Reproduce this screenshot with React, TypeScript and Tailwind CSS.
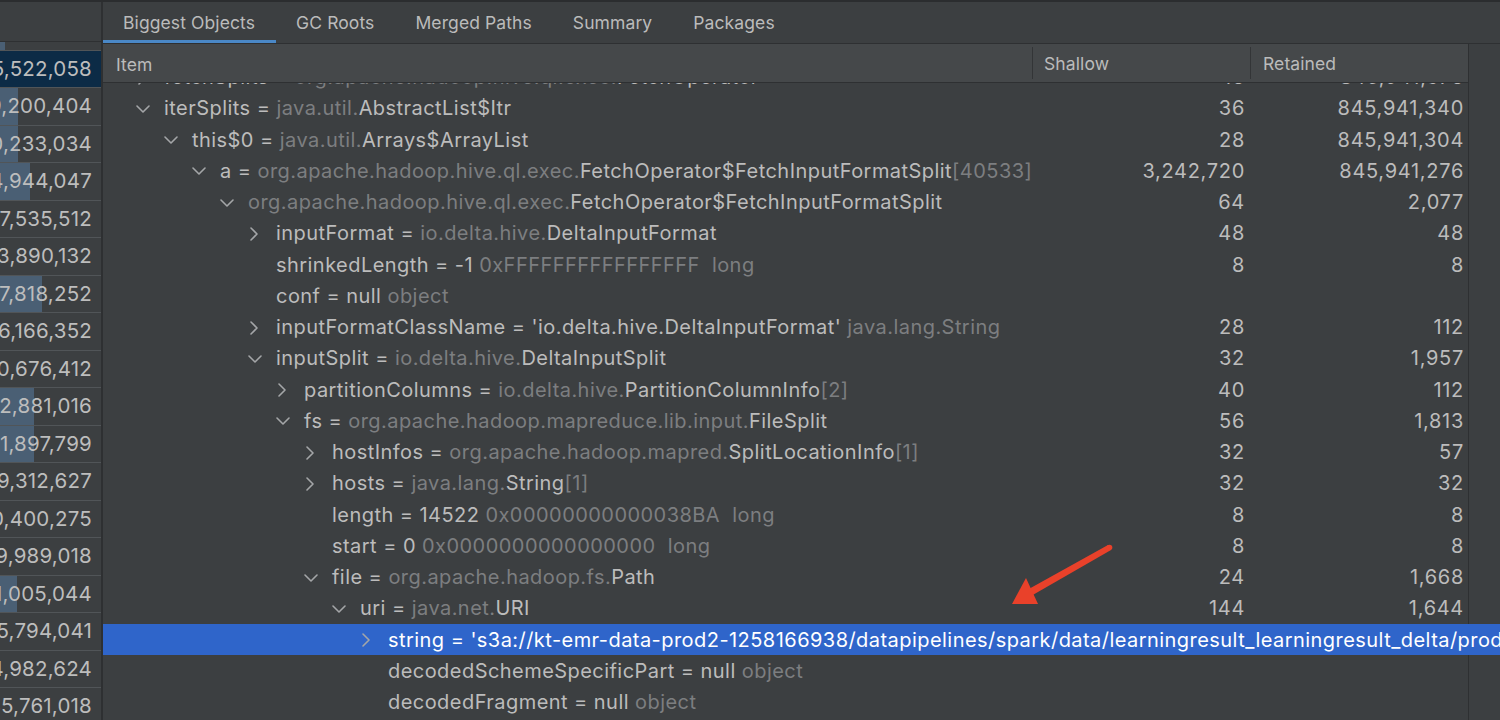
import React from 'react';

type Tone = 'n' | 'd';
type Seg = [string, Tone];
type Row = {
  lvl: number;
  chev: 'down' | 'right' | null;
  segs: Seg[];
  shallow?: string;
  retained?: string;
  selected?: boolean;
};

const leftRows: { v: string; bar: number; active?: boolean }[] = [
  { v: '4,117,912,404', bar: 5 },
  { v: '1,175,522,058', bar: 0, active: true },
  { v: '1,149,200,404', bar: 18 },
  { v: '1,130,233,034', bar: 18 },
  { v: '1,124,944,047', bar: 30 },
  { v: '1,117,535,512', bar: 0 },
  { v: '1,113,890,132', bar: 0 },
  { v: '1,107,818,252', bar: 42 },
  { v: '1,096,166,352', bar: 0 },
  { v: '1,090,676,412', bar: 0 },
  { v: '1,082,881,016', bar: 34 },
  { v: '1,071,897,799', bar: 34 },
  { v: '1,069,312,627', bar: 0 },
  { v: '1,060,400,275', bar: 0 },
  { v: '1,059,989,018', bar: 0 },
  { v: '1,051,005,044', bar: 17 },
  { v: '1,045,794,041', bar: 0 },
  { v: '1,044,982,624', bar: 0 },
  { v: '1,035,761,018', bar: 0 },
];

const rows: Row[] = [
  { lvl: 0, chev: 'right', segs: [['fetchSplits = ', 'n'], ['org.apache.hadoop.hive.ql.exec.', 'd'], ['FetchOperator', 'n']], shallow: '16', retained: '845,941,376' },
  { lvl: 0, chev: 'down', segs: [['iterSplits = ', 'n'], ['java.util.', 'd'], ['AbstractList$Itr', 'n']], shallow: '36', retained: '845,941,340' },
  { lvl: 1, chev: 'down', segs: [['this$0 = ', 'n'], ['java.util.', 'd'], ['Arrays$ArrayList', 'n']], shallow: '28', retained: '845,941,304' },
  { lvl: 2, chev: 'down', segs: [['a = ', 'n'], ['org.apache.hadoop.hive.ql.exec.', 'd'], ['FetchOperator$FetchInputFormatSplit', 'n'], ['[40533]', 'd']], shallow: '3,242,720', retained: '845,941,276' },
  { lvl: 3, chev: 'down', segs: [['org.apache.hadoop.hive.ql.exec.', 'd'], ['FetchOperator$FetchInputFormatSplit', 'n']], shallow: '64', retained: '2,077' },
  { lvl: 4, chev: 'right', segs: [['inputFormat = ', 'n'], ['io.delta.hive.', 'd'], ['DeltaInputFormat', 'n']], shallow: '48', retained: '48' },
  { lvl: 4, chev: null, segs: [['shrinkedLength = -1 ', 'n'], ['0xFFFFFFFFFFFFFFFF  long', 'd']], shallow: '8', retained: '8' },
  { lvl: 4, chev: null, segs: [['conf = null ', 'n'], ['object', 'd']] },
  { lvl: 4, chev: 'right', segs: [["inputFormatClassName = 'io.delta.hive.DeltaInputFormat' ", 'n'], ['java.lang.String', 'd']], shallow: '28', retained: '112' },
  { lvl: 4, chev: 'down', segs: [['inputSplit = ', 'n'], ['io.delta.hive.', 'd'], ['DeltaInputSplit', 'n']], shallow: '32', retained: '1,957' },
  { lvl: 5, chev: 'right', segs: [['partitionColumns = ', 'n'], ['io.delta.hive.', 'd'], ['PartitionColumnInfo', 'n'], ['[2]', 'd']], shallow: '40', retained: '112' },
  { lvl: 5, chev: 'down', segs: [['fs = ', 'n'], ['org.apache.hadoop.mapreduce.lib.input.', 'd'], ['FileSplit', 'n']], shallow: '56', retained: '1,813' },
  { lvl: 6, chev: 'right', segs: [['hostInfos = ', 'n'], ['org.apache.hadoop.mapred.', 'd'], ['SplitLocationInfo', 'n'], ['[1]', 'd']], shallow: '32', retained: '57' },
  { lvl: 6, chev: 'right', segs: [['hosts = ', 'n'], ['java.lang.', 'd'], ['String', 'n'], ['[1]', 'd']], shallow: '32', retained: '32' },
  { lvl: 6, chev: null, segs: [['length = 14522 ', 'n'], ['0x00000000000038BA  long', 'd']], shallow: '8', retained: '8' },
  { lvl: 6, chev: null, segs: [['start = 0 ', 'n'], ['0x0000000000000000  long', 'd']], shallow: '8', retained: '8' },
  { lvl: 6, chev: 'down', segs: [['file = ', 'n'], ['org.apache.hadoop.fs.', 'd'], ['Path', 'n']], shallow: '24', retained: '1,668' },
  { lvl: 7, chev: 'down', segs: [['uri = ', 'n'], ['java.net.', 'd'], ['URI', 'n']], shallow: '144', retained: '1,644' },
  { lvl: 8, chev: 'right', selected: true, segs: [["string = 's3a://kt-emr-data-prod2-1258166938/datapipelines/spark/data/learningresult_learningresult_delta/prod/part-00000.snappy.parquet'", 'n']] },
  { lvl: 8, chev: null, segs: [['decodedSchemeSpecificPart = null ', 'n'], ['object', 'd']] },
  { lvl: 8, chev: null, segs: [['decodedFragment = null ', 'n'], ['object', 'd']] },
  { lvl: 8, chev: null, segs: [['host = null ', 'n'], ['object', 'd']] },
];

const tabs = ['Biggest Objects', 'GC Roots', 'Merged Paths', 'Summary', 'Packages'];

function Chevron({ dir }: { dir: 'down' | 'right' | null }) {
  if (!dir) return <span className="w-[28px] shrink-0" />;
  return (
    <span className="w-[28px] shrink-0 flex items-center">
      {dir === 'down' ? (
        <svg width="14" height="10" viewBox="0 0 14 10">
          <polyline points="1,2 7,8 13,2" fill="none" stroke="#a4a6a8" strokeWidth="1.6" strokeLinejoin="round" strokeLinecap="round" />
        </svg>
      ) : (
        <svg width="10" height="14" viewBox="0 0 10 14" className="ml-[1px]">
          <polyline points="2,1 8,7 2,13" fill="none" stroke="#a4a6a8" strokeWidth="1.6" strokeLinejoin="round" strokeLinecap="round" />
        </svg>
      )}
    </span>
  );
}

function LeftPanel() {
  return (
    <div className="w-[103px] shrink-0 flex flex-col border-r-2 border-[#2e3032] bg-[#3c3f41]">
      <div className="h-[40px] shrink-0 border-b border-[#2e3032]" />
      <div className="flex flex-col overflow-hidden">
        {leftRows.map((r, i) => (
          <div
            key={i}
            className={`relative h-[37.5px] shrink-0 flex items-center justify-end pr-[9px] pt-[1px] border-b border-[#515558] overflow-hidden ${
              i === 0 ? 'mt-[-29px]' : ''
            } ${r.active ? 'bg-[#0c2b46]' : ''}`}
          >
            {r.bar > 0 && (
              <div className="absolute left-0 top-0 bottom-0 bg-[#4a5f74]" style={{ width: r.bar }} />
            )}
            <span className="relative shrink-0 whitespace-nowrap text-[20.5px] tracking-[0.2px] text-[#bdbdbd]">{r.v}</span>
          </div>
        ))}
      </div>
    </div>
  );
}

function TreeRow({ row, first }: { row: Row; first: boolean }) {
  const pad = 33 + row.lvl * 28;
  if (row.selected) {
    return (
      <div className="relative z-10 h-[31.25px] shrink-0 mr-[-33px] flex items-center bg-[#2f65ca] overflow-hidden">
        <div className="flex items-center whitespace-pre pt-[2px]" style={{ paddingLeft: pad }}>
          <Chevron dir={row.chev} />
          {row.segs.map((s, i) => (
            <span key={i} className="text-white">{s[0]}</span>
          ))}
        </div>
      </div>
    );
  }
  return (
    <div className={`h-[31.25px] shrink-0 flex items-center pt-[2px] ${first ? 'mt-[-22px]' : ''}`}>
      <div className="w-[929px] shrink-0 flex items-center overflow-hidden whitespace-pre" style={{ paddingLeft: pad }}>
        <Chevron dir={row.chev} />
        {row.segs.map((s, i) => (
          <span key={i} className={s[1] === 'd' ? 'text-[#7c7e80]' : 'text-[#bcbcbc]'}>{s[0]}</span>
        ))}
      </div>
      <div className="w-[218px] shrink-0 text-right pr-[5px] tracking-[0.7px] text-[#bcbcbc]">{row.shallow}</div>
      <div className="flex-1 text-right pr-[4px] tracking-[0.7px] text-[#bcbcbc]">{row.retained}</div>
    </div>
  );
}

export default function App() {
  return (
    <div className="relative w-[1500px] h-[720px] overflow-hidden flex bg-[#3c3f41] border-t-2 border-[#2b2d2f] font-['Inter','Noto_Sans',sans-serif] antialiased">
      <LeftPanel />

      <div className="flex-1 flex flex-col min-w-0">
        {/* tab strip */}
        <div className="h-[42px] shrink-0 flex items-stretch border-b border-[#2e3032] text-[17.5px] tracking-[0.1px] text-[#bbbbbb]">
          {tabs.map((t, i) => (
            <div
              key={t}
              className={`flex items-center pl-[20px] pr-[21px] pt-[5px] ${i === 0 ? 'border-b-[3px] border-[#4a88c7]' : 'pb-[3px]'}`}
            >
              {t}
            </div>
          ))}
        </div>

        <div className="flex-1 flex min-h-0">
          <div className="w-[1365px] shrink-0 flex flex-col">
            {/* table header */}
            <div className="relative z-20 h-[39px] shrink-0 flex items-stretch bg-[#45484a] border-b border-[#2e3032] pt-[3px] text-[17.5px] tracking-[0.1px] text-[#bbbbbb]">
              <div className="w-[929px] shrink-0 flex items-center pl-[13px] pt-[2px]">Item</div>
              <div className="w-[218px] shrink-0 flex items-center pl-[11px] pt-[2px] mb-[3px] border-l border-[#333537]">Shallow</div>
              <div className="flex-1 flex items-center pl-[12px] pt-[2px] mb-[3px] border-l border-[#333537]">Retained</div>
            </div>
            {/* tree */}
            <div className="flex flex-col text-[20px] leading-[31.25px] tracking-[0.45px]">
              {rows.map((r, i) => (
                <TreeRow key={i} row={r} first={i === 0} />
              ))}
            </div>
          </div>
          <div className="flex-1 border-l border-[#2e3032] bg-[#3c3f41]" />
        </div>
      </div>

      {/* annotation arrow */}
      <svg className="absolute left-0 top-0 pointer-events-none z-30" width="1500" height="720">
        <polygon points="1108,543 1111,548 1031,594 1027,588" fill="#e9412a" />
        <circle cx="1109.5" cy="545.5" r="2.8" fill="#e9412a" />
        <polygon points="1012,602 1026,576 1038,602" fill="#e9412a" />
      </svg>
    </div>
  );
}
